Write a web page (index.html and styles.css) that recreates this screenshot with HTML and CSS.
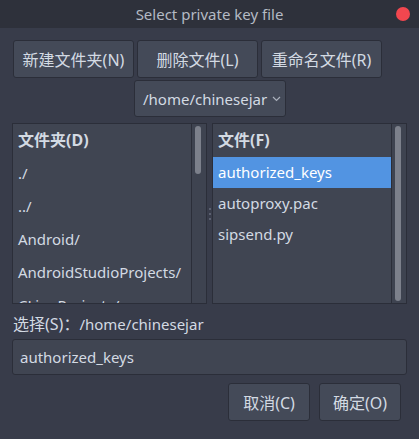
FILE: index.html
```html
<!DOCTYPE html>
<html lang="zh-CN">
<head>
<meta charset="utf-8">
<title>Select private key file</title>
<link rel="stylesheet" href="styles.css">
</head>
<body>
<div class="window">
  <header class="titlebar">
    <span class="title">Select private key file</span>
    <span class="close"></span>
  </header>
  <main class="content">
    <div class="actions">
      <button class="btn act">新建文件夹(N)</button>
      <button class="btn act">删除文件(L)</button>
      <button class="btn act">重命名文件(R)</button>
    </div>
    <div class="combo-row">
      <div class="combo">
        <span class="combo-text">/home/chinesejar</span>
        <svg class="chev" width="9" height="6" viewBox="0 0 9 6"><path d="M1 1 L4.5 4.5 L8 1" fill="none" stroke="#aab1bc" stroke-width="1.2"/></svg>
      </div>
    </div>
    <div class="panes">
      <div class="pane">
        <ul class="list dirs">
          <li class="head">文件夹(D)</li>
          <li>./</li>
          <li>../</li>
          <li>Android/</li>
          <li>AndroidStudioProjects/</li>
          <li>CLionProjects/</li>
        </ul>
        <div class="trough"><div class="thumb short"></div></div>
      </div>
      <div class="splitter"><i></i><i></i><i></i></div>
      <div class="pane">
        <ul class="list files">
          <li class="head">文件(F)</li>
          <li class="sel">authorized_keys</li>
          <li>autoproxy.pac</li>
          <li>sipsend.py</li>
        </ul>
        <div class="trough"><div class="thumb full"></div></div>
      </div>
    </div>
    <div class="sel-label"><span class="cjk">选择(S)：</span>/home/chinesejar</div>
    <div class="entry">authorized_keys</div>
    <div class="dialog-btns">
      <button class="btn dlg">取消(C)</button>
      <button class="btn dlg">确定(O)</button>
    </div>
  </main>
</div>
</body>
</html>
```

FILE: styles.css
```css
* { box-sizing: border-box; }
html, body { margin: 0; padding: 0; }
body {
  width: 419px;
  height: 439px;
  background: #383c4a;
  font-family: "Noto Sans", "Noto Sans CJK SC", sans-serif;
  font-size: 15px;
  color: #d3dae3;
  overflow: hidden;
}
.window { width: 419px; height: 439px; display: flex; flex-direction: column; }
.titlebar {
  height: 28px;
  flex: none;
  background: #2e313b;
  display: grid;
  grid-template-columns: 1fr auto 1fr;
  align-items: center;
}
.title {
  grid-column: 2;
  color: #b4bac4;
  font-size: 15px;
  line-height: 28px;
}
.close {
  grid-column: 3;
  justify-self: end;
  width: 14px;
  height: 14px;
  border-radius: 50%;
  background: #f2474f;
  margin-right: 9px;
}
.content {
  flex: 1;
  display: flex;
  flex-direction: column;
  padding: 12px 12px 0 12px;
}
.btn {
  font-family: "Noto Sans", "Noto Sans CJK SC", sans-serif;
  font-size: 16px;
  color: #d3dae3;
  background: #444a58;
  border: 1px solid #2b2e39;
  border-radius: 3px;
  padding: 0;
  height: 38px;
}
.actions { display: flex; gap: 3px; padding-left: 1px; }
.act { width: 121px; }
.combo-row { display: flex; justify-content: center; margin-top: 2px; padding-left: 1px; }
.combo {
  width: 152px;
  height: 37px;
  background: #444a58;
  border: 1px solid #2b2e39;
  border-radius: 3px;
  display: flex;
  align-items: center;
  justify-content: space-between;
  padding: 0 4px 0 8px;
}
.panes { display: flex; margin-top: 6px; height: 181px; }
.pane {
  width: 195px;
  height: 181px;
  border: 1px solid #2b2e39;
  display: flex;
  background: #404552;
  overflow: hidden;
}
.list {
  list-style: none;
  margin: 0;
  padding: 0;
  width: 179px;
  flex: none;
  border-right: 1px solid #2b2e39;
  overflow: hidden;
}
.list li {
  height: 31px;
  line-height: 31px;
  padding-left: 5px;
  white-space: nowrap;
}
.dirs li { height: 33px; line-height: 33px; }
.list li.head { height: 33px; line-height: 32px; font-weight: bold; font-size: 16px; }
.list li.sel { background: #5294e2; color: #ffffff; }
.trough { flex: 1; background: #3e4350; padding: 2px 0 2px 3px; }
.thumb { width: 6px; border-radius: 3px; background: #7c808b; }
.thumb.short { height: 48px; }
.thumb.full { height: 100%; }
.splitter {
  width: 5px;
  display: flex;
  flex-direction: column;
  justify-content: center;
  align-items: center;
  gap: 3px;
}
.splitter i { display: block; width: 2px; height: 2px; background: #5b6070; }
.sel-label { height: 35px; padding-top: 6px; line-height: 29px; padding-left: 1px; }
.cjk { font-size: 16px; }
.entry {
  height: 36px;
  background: #404552;
  border: 1px solid #2b2e39;
  border-radius: 3px;
  line-height: 34px;
  padding-left: 7px;
}
.dialog-btns { display: flex; justify-content: flex-end; gap: 9px; margin-top: 8px; padding-right: 6px; }
.dlg { width: 82px; }
```
